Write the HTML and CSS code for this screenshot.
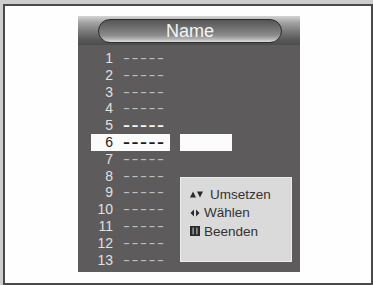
FILE: index.html
```html
<!DOCTYPE html>
<html lang="de">
<head>
<meta charset="utf-8">
<title>Name</title>
<link rel="stylesheet" href="styles.css">
</head>
<body>
<div class="frame">
  <div class="panel">
    <div class="header">
      <div class="pill">Name</div>
    </div>
    <div class="body">
      <div class="list">
        <div class="row"><span class="num">1</span><span class="dash">-----</span></div>
        <div class="row"><span class="num">2</span><span class="dash">-----</span></div>
        <div class="row"><span class="num">3</span><span class="dash">-----</span></div>
        <div class="row"><span class="num">4</span><span class="dash">-----</span></div>
        <div class="row bright"><span class="num">5</span><span class="dash">-----</span></div>
        <div class="row selected"><span class="num">6</span><span class="dash">-----</span></div>
        <div class="row"><span class="num">7</span><span class="dash">-----</span></div>
        <div class="row"><span class="num">8</span><span class="dash">-----</span></div>
        <div class="row"><span class="num">9</span><span class="dash">-----</span></div>
        <div class="row"><span class="num">10</span><span class="dash">-----</span></div>
        <div class="row"><span class="num">11</span><span class="dash">-----</span></div>
        <div class="row"><span class="num">12</span><span class="dash">-----</span></div>
        <div class="row"><span class="num">13</span><span class="dash">-----</span></div>
      </div>
      <div class="side">
        <div class="field"></div>
        <div class="help">
          <div class="hline">
            <svg class="ico ico-ud" width="14" height="8" viewBox="0 0 14 8"><polygon points="0,7.5 3,1.5 6,7.5" fill="#2a2a2a"/><polygon points="7,1.5 13,1.5 10,7.5" fill="#2a2a2a"/></svg>
            <span>Umsetzen</span>
          </div>
          <div class="hline">
            <svg class="ico ico-lr" width="10" height="8" viewBox="0 0 10 8"><polygon points="4,0.5 4,7.5 0.5,4" fill="#2a2a2a"/><polygon points="6,0.5 6,7.5 9.5,4" fill="#2a2a2a"/></svg>
            <span>Wählen</span>
          </div>
          <div class="hline">
            <svg class="ico ico-menu" width="10" height="10" viewBox="0 0 10 10"><rect x="0" y="0" width="10" height="10" fill="#2a2a2a"/><rect x="2.6" y="1.6" width="1" height="6.8" fill="#d8d8d8"/><rect x="6.4" y="1.6" width="1" height="6.8" fill="#d8d8d8"/></svg>
            <span>Beenden</span>
          </div>
        </div>
      </div>
    </div>
  </div>
</div>
</body>
</html>
```

FILE: styles.css
```css
html, body {
  margin: 0;
  padding: 0;
}
body {
  background: #cdcdcd;
  font-family: "Liberation Sans", Arial, sans-serif;
  width: 373px;
  height: 285px;
  overflow: hidden;
}
.frame {
  margin: 4px 0 0 3px;
  width: 370px;
  height: 281px;
  box-sizing: border-box;
  border: 2px solid #4a4a4a;
  background: #fefefe;
  padding: 10px 0 0 73px;
}
.panel {
  width: 222px;
  height: 256px;
  background: #5d5b5b;
  display: flex;
  flex-direction: column;
}
.header {
  height: 29px;
  display: flex;
  align-items: center;
  justify-content: center;
  padding-left: 2px;
  box-sizing: border-box;
  background: linear-gradient(to bottom, #d4d4d4 0%, #a4a4a4 22%, #777 55%, #5a5a5a 80%, #4c4c4c 100%);
}
.pill {
  width: 184px;
  height: 24px;
  box-sizing: border-box;
  border-radius: 12px;
  border: 1px solid #2c2c2c;
  background: linear-gradient(to bottom, #555 0%, #6f6f6f 35%, #8c8c8c 70%, #b8b8b8 88%, #dedede 100%);
  color: #f4f4f4;
  font-size: 18px;
  line-height: 22px;
  text-align: center;
}
.body {
  display: flex;
  padding: 5px 0 0 13px;
  gap: 10px;
}
.list {
  width: 79px;
  display: flex;
  flex-direction: column;
}
.row {
  height: 16.8px;
  display: flex;
  align-items: center;
}
.num {
  width: 22px;
  text-align: right;
  font-size: 14px;
  line-height: 16.8px;
  color: #e0e0e0;
}
.dash {
  margin-left: 10px;
  width: 28px;
  font-size: 15px;
  line-height: 16.8px;
  letter-spacing: 1.07px;
  white-space: nowrap;
  color: #bcbcbc;
  transform: scaleX(1.4);
  transform-origin: left center;
}
.row.bright .dash {
  color: #f6f6f6;
  font-weight: bold;
}
.row.selected {
  background: #fbfbfb;
}
.row.selected .num {
  color: #1c1c1c;
}
.row.selected .dash {
  color: #1c1c1c;
  font-weight: bold;
}
.side {
  display: flex;
  flex-direction: column;
  padding-top: 84px;
}
.field {
  width: 52px;
  height: 17px;
  background: #fcfcfc;
}
.help {
  margin-top: 26px;
  width: 112px;
  height: 85px;
  box-sizing: border-box;
  background: #dadada;
  border: 1px solid #ececec;
  padding: 7px 0 0 9px;
}
.hline {
  height: 18.5px;
  display: flex;
  align-items: center;
  gap: 4px;
  font-size: 13.5px;
  color: #333;
}
.ico-ud {
  margin-right: 2px;
}
```
